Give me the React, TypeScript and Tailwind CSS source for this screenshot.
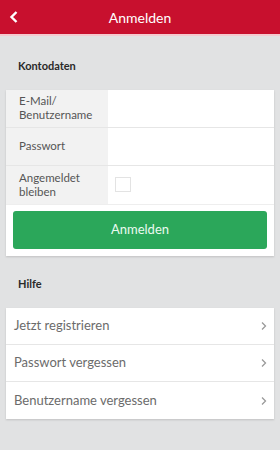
import React from "react";

const font = { fontFamily: "Lato, 'Liberation Sans', sans-serif" };

function Chevron() {
  return (
    <svg width="8" height="10" viewBox="0 0 8 10" className="shrink-0">
      <path d="M2 1.5 L5.5 5 L2 8.5" fill="none" stroke="#9a9a9a" strokeWidth="1.3" />
    </svg>
  );
}

function FieldRow({ label, children, last }: { label: string; children?: React.ReactNode; last?: boolean }) {
  return (
    <div className={"flex h-[38px] " + (last ? "" : "border-b border-[#e6e6e6]")}>
      <div className="w-[102px] shrink-0 bg-[#f2f2f2] px-[13px] flex items-center text-[11.5px] leading-[14px] text-[#555]">
        {label}
      </div>
      <div className="flex-1 bg-white flex items-center px-[7px]">{children}</div>
    </div>
  );
}

function HelpRow({ label, last }: { label: string; last?: boolean }) {
  return (
    <div className={"flex h-[37px] items-center justify-between pl-[8px] pr-[6px] " + (last ? "" : "border-b border-[#e6e6e6]")}>
      <span className="text-[13px] text-[#6b6b6b]">{label}</span>
      <Chevron />
    </div>
  );
}

export default function App() {
  return (
    <div className="w-[280px] h-[450px] bg-[#e1e2e3] overflow-hidden" style={font}>
      {/* header */}
      <div className="h-[36px] bg-[#c8102e] border-b-2 border-[#f5c9cf] flex items-center relative">
        <svg width="12" height="14" viewBox="0 0 12 14" className="ml-[8px]">
          <path d="M8.5 2 L3.5 7 L8.5 12" fill="none" stroke="white" strokeWidth="2.4" />
        </svg>
        <div className="absolute inset-0 flex items-center justify-center text-white text-[14px]">Anmelden</div>
      </div>

      <div className="px-[6px]">
        <div className="pt-[22px] pb-[15px] pl-[12px] text-[11px] font-bold text-[#2a2a2a]">Kontodaten</div>

        <div className="bg-white shadow-[0_1px_2px_rgba(0,0,0,0.15)]">
          <FieldRow label="E-Mail/ Benutzername" />
          <FieldRow label="Passwort" />
          <FieldRow label="Angemeldet bleiben" last>
            <div className="w-[16px] h-[15px] border border-[#e3e3e3] bg-white" />
          </FieldRow>
          <div className="border-t border-[#eeeeee] px-[7px] pt-[6px] pb-[7px]">
            <button className="w-full h-[38px] rounded-[3px] bg-[#2ba75a] text-[#eafaf0] text-[13px]">Anmelden</button>
          </div>
        </div>

        <div className="pt-[20px] pb-[16px] pl-[12px] text-[11px] font-bold text-[#2a2a2a]">Hilfe</div>

        <div className="bg-white shadow-[0_1px_2px_rgba(0,0,0,0.15)]">
          <HelpRow label="Jetzt registrieren" />
          <HelpRow label="Passwort vergessen" />
          <HelpRow label="Benutzername vergessen" last />
        </div>
      </div>
    </div>
  );
}
